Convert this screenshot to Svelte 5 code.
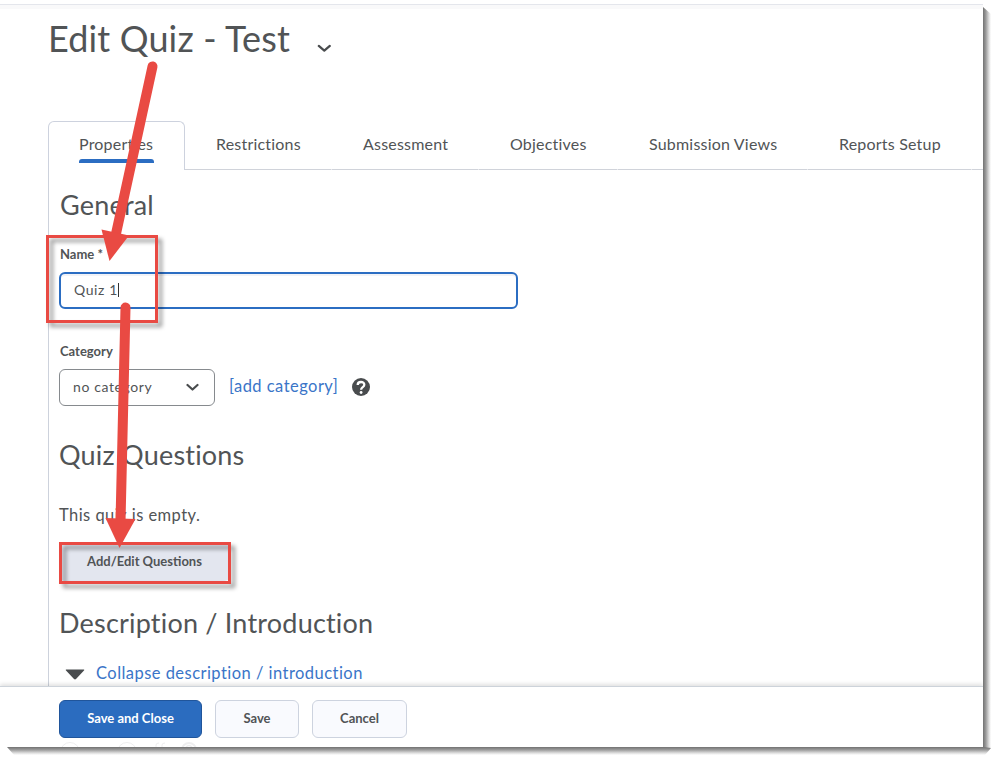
<script>
  const tabs = [
    { label: 'Properties', width: 137 },
    { label: 'Restrictions', width: 147 },
    { label: 'Assessment', width: 147 },
    { label: 'Objectives', width: 139 },
    { label: 'Submission Views', width: 190 },
    { label: 'Reports Setup', width: 164 },
    { label: '', width: 40 }
  ];
</script>

<div class="canvas">
<div class="page">
  <div class="topbar"></div>
  <header>
    <h1>Edit Quiz - Test</h1>
    <svg class="title-chevron" width="14" height="9" viewBox="0 0 14 9"><path d="M1.800 1.900 7.300 6.600l5.500-4.700" /></svg>
  </header>

  <nav>
    {#each tabs as tab, i}
      <div class="tab" class:active={i === 0} style="width: {tab.width}px"><span>{tab.label}</span></div>
    {/each}
  </nav>

  <main>
    <h2 class="general">General</h2>
    <div class="label name">Name <b>*</b></div>
    <div class="input"><span>Quiz 1</span><i></i></div>
    <div class="label category">Category</div>
    <div class="row">
      <div class="select">
        <span>no category</span>
        <svg width="14" height="9" viewBox="0 0 14 9"><path d="M2.500 2 7.500 6.500l5-4.500" /></svg>
      </div>
      <a class="add">[add category]</a>
      <svg class="help" width="18" height="18" viewBox="0 0 18 18">
        <circle cx="9" cy="9" r="9" fill="#494c4e" />
        <path d="M5.700 7C5.700 3 12.300 3.100 12.300 6.700 12.300 9.200 9.100 9 9.100 11.700" fill="none" stroke="#fff" stroke-width="2.300" />
        <circle cx="9.100" cy="14.500" r="1.400" fill="#fff" />
      </svg>
    </div>
    <h2 class="questions">Quiz Questions</h2>
    <p>This quiz is empty.</p>
    <div class="edit"><span>Add/Edit Questions</span></div>
    <h2 class="description">Description / Introduction</h2>
    <div class="collapse">
      <svg width="20" height="11" viewBox="0 0 20 11"><path d="M1 .5h18q.6.4 0 1L11 10q-1 .8-2 0L1 1.500q-.6-.6 0-1Z" fill="#494c4e" /></svg>
      <a>Collapse description / introduction</a>
    </div>
  </main>

  <footer>
    <div class="btn primary"><span>Save and Close</span></div>
    <div class="btn save"><span>Save</span></div>
    <div class="btn cancel"><span>Cancel</span></div>
    <svg class="ghost" width="150" height="5" viewBox="0 0 150 5" fill="none" stroke="#eeeeef">
      <circle cx="11" cy="10" r="9.500" /><circle cx="68" cy="10" r="9.500" />
      <path d="M97 5V3q0-2 3-2M103 5V3q0-2 3-2" />
      <circle cx="130" cy="8" r="7" stroke-width="2" /><path d="M127 5q3-3 6 0" stroke-width="1.500" />
    </svg>
  </footer>

  <div class="mark mark-name"></div>
  <div class="mark mark-edit"></div>
  <svg class="arrows" width="983" height="747" viewBox="0 0 983 747" fill="#e94a43" stroke="#e94a43">
    <path d="M152.500 66.500 115.500 236" stroke-width="10" stroke-linecap="round" />
    <path d="M101.500 229.500 129 235.500 109.500 261Z" stroke="none" />
    <path d="M125.500 307.500 120.500 522" stroke-width="10" stroke-linecap="round" />
    <path d="M105.500 518 135.500 519 119.500 548Z" stroke="none" />
  </svg>
</div>
</div>

<style>
  :global(body) { margin: 0; background: #fff; }
  * { box-sizing: border-box; }
  .canvas { width: 998px; height: 762px; overflow: hidden; background: #fff; }
  .page {
    position: relative;
    width: 983px; height: 747px;
    display: flex; flex-direction: column;
    background: #fff; color: #515456;
    font-family: Lato, "Liberation Sans", sans-serif;
    white-space: nowrap;
  }
  .page::before, .page::after { content: ""; position: absolute; }
  .page::before {
    left: 983px; top: 7px; width: 8px; height: 741px;
    background: linear-gradient(90deg, #727272, #9b9b9b 35%, #dedede 75%, #fff);
    clip-path: polygon(0 0, 100% 7px, 100% 100%, 0 100%);
  }
  .page::after {
    left: 7px; top: 747px; width: 984px; height: 8px;
    background: linear-gradient(#727272, #9b9b9b 35%, #dedede 75%, #fff);
    clip-path: polygon(0 0, 976px 0, 100% 1px, 978px 100%, 7px 100%);
  }
  .topbar { flex: none; margin-top: 4px; height: 5px; border-top: 1px solid #e4e6ec; background: #f9f9fa; }
  header { flex: none; height: 112px; display: flex; padding-left: 48px; }
  h1, h2, p { margin: 0; font-weight: 400; }
  h1 { width: 269px; margin-top: 7px; font-size: 36px; line-height: 44px; letter-spacing: .15px; }
  .title-chevron { margin-top: 35px; }
  .title-chevron path, .select path { fill: none; stroke: #494c4e; stroke-width: 2.200; stroke-linecap: round; stroke-linejoin: round; }
  nav { flex: none; height: 49px; padding-left: 48px; display: flex; overflow: hidden; }
  .tab {
    flex: none; height: 49px; padding: 13px 0 0 31px;
    font-size: 16px; line-height: 20px; letter-spacing: .2px;
    border-bottom: 1px solid #d0d3da; border-right: 1px solid #fff;
  }
  .tab.active { padding-left: 30px; border: 1px solid #cdd2de; border-bottom: 0; border-radius: 6px 6px 0 0; padding-top: 12px; }
  .active span { display: block; position: relative; width: 75px; height: 29px; }
  .active span::after { content: ""; position: absolute; left: 0; bottom: 0; width: 75px; height: 4px; background: #2b6dc2; border-radius: 3px 3px 0 0; }
  main { flex: none; height: 516px; margin-left: 48px; padding-left: 10px; border-left: 1px solid #cdd2dc; display: flex; flex-direction: column; }
  h2 { flex: none; font-size: 27px; line-height: 36px; height: 36px; letter-spacing: .2px; }
  .general { margin-top: 17px; padding-left: 1px; }
  .label { flex: none; height: 18px; font-size: 13px; line-height: 18px; font-weight: 700; padding-left: 1px; }
  .name { margin-top: 22px; }
  .name b { font-weight: 700; }
  .input {
    flex: none; width: 459px; height: 37px; margin-top: 9px; padding: 0 0 2px 13px;
    display: flex; align-items: center; border: 2px solid #2b6dc2; border-radius: 6px;
    box-shadow: inset 0 2px 0 #f2f3f7; font-size: 14px; letter-spacing: .6px;
  }
  .input i { width: 1px; height: 14px; background: #333; }
  .category { margin-top: 33px; }
  .row { flex: none; height: 37px; margin-top: 9px; display: flex; align-items: center; }
  .select {
    width: 156px; height: 37px; padding: 0 15px 2px 13px; display: flex; align-items: center; justify-content: space-between;
    border: 1px solid #868a8e; border-radius: 6px; font-size: 14px; letter-spacing: .6px;
  }
  .select svg { margin-top: 2px; }
  a { color: #3a75c8; font-size: 16.500px; letter-spacing: .46px; }
  .add { width: 123px; margin-left: 14px; margin-top: -3px; }
  .help { margin-top: -2px; }
  .questions { margin-top: 31px; }
  p { flex: none; height: 24px; margin-top: 30px; font-size: 16.500px; line-height: 24px; letter-spacing: .45px; }
  .edit {
    flex: none; width: 171px; height: 38px; margin-top: 16px; padding-left: 28px;
    border-radius: 6px; background: #e3e6ef; font-size: 13px; line-height: 37px; font-weight: 700;
  }
  .description { margin-top: 24px; }
  .collapse { flex: none; height: 24px; margin-top: 20px; padding-left: 6px; display: flex; align-items: center; }
  .collapse svg { margin: 3px 11px 0 0; }
  footer {
    position: relative; flex: none; height: 61px; padding: 13px 0 0 59px; display: flex; gap: 13px;
    border-top: 1px solid #cdd3da; background: #fff; box-shadow: 0 -2px 4px rgba(0, 0, 0, .12); clip-path: inset(-6px 0 0 0);
  }
  .btn {
    height: 38px; display: flex; align-items: center; justify-content: center;
    border: 1px solid #cdd3df; border-radius: 6px; background: #f9fafe; font-size: 13px; font-weight: 700;
  }
  .btn span { margin-top: -2px; }
  .primary { width: 143px; background: #2b6cbf; border-color: #20559b; color: #fff; }
  .save { width: 84px; }
  .cancel { width: 95px; }
  .ghost { position: absolute; left: 59px; bottom: 0; }
  .mark { position: absolute; border: 3px solid #e94a43; filter: drop-shadow(4px 4px 2px rgba(0, 0, 0, .42)); }
  .mark-name { left: 46px; top: 235px; width: 112px; height: 88px; }
  .mark-edit { left: 59px; top: 542px; width: 172px; height: 42px; }
  .arrows { position: absolute; left: 0; top: 0; }
</style>
